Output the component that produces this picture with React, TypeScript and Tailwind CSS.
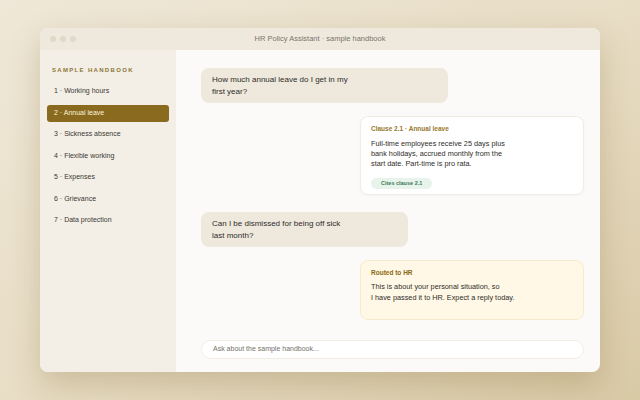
const sections = [
  'Working hours',
  'Annual leave',
  'Sickness absence',
  'Flexible working',
  'Expenses',
  'Grievance',
  'Data protection',
];

export default function App() {
  return (
    <div
      className="w-[640px] h-[400px] overflow-hidden bg-gradient-to-br from-[#efe8d8] via-[#e8ddc5] to-[#d9caa6] pt-[28px] pl-[40px]"
      style={{ fontFamily: '"Liberation Sans", Arial, sans-serif' }}
    >
      <div className="w-[560px] h-[344px] rounded-lg overflow-hidden flex flex-col bg-[#fcfaf8] shadow-[0_12px_30px_rgba(120,95,40,0.25)]">
        {/* title bar */}
        <div className="h-[22px] shrink-0 bg-[#efe9dd] flex items-center relative">
          <div className="flex gap-[4px] pl-[10px]">
            <span className="w-[6px] h-[6px] rounded-full bg-[#e0d8c8]"></span>
            <span className="w-[6px] h-[6px] rounded-full bg-[#e0d8c8]"></span>
            <span className="w-[6px] h-[6px] rounded-full bg-[#e0d8c8]"></span>
          </div>
          <div className="absolute inset-0 flex items-center justify-center text-[7.5px] text-[#7a756c]">
            HR Policy Assistant · sample handbook
          </div>
        </div>

        <div className="flex flex-1 min-h-0">
          {/* sidebar */}
          <div className="w-[136px] shrink-0 bg-[#f3efe7] px-[7px] pt-[16px]">
            <div className="pl-[5px] text-[6px] font-bold tracking-[0.22em] text-[#8c7634] mb-[8px]">
              SAMPLE HANDBOOK
            </div>
            <div className="flex flex-col gap-[4.5px]">
              {sections.map((s, i) => (
                <div
                  key={s}
                  className={`h-[17px] flex items-center pl-[7px] rounded-[3px] text-[7px] ${
                    i === 1 ? 'bg-[#8a6a1f] text-[#fbf3dd]' : 'text-[#3b3833]'
                  }`}
                >
                  {i + 1} · {s}
                </div>
              ))}
            </div>
          </div>

          {/* chat */}
          <div className="flex-1 flex flex-col pl-[25px] pr-[16px] pt-[18px]">
            <div className="w-[247px] h-[35px] rounded-lg bg-[#eee8dd] px-[11px] pt-[5.5px] text-[8px] leading-[12.5px] text-[#2f2d29]">
              How much annual leave do I get in my
              <br />
              first year?
            </div>

            <div className="self-end mt-[13px] w-[224px] h-[79px] rounded-lg bg-white border border-[#f0ebe3] shadow-[0_1px_3px_rgba(0,0,0,0.03)] px-[10px] pt-[8px]">
              <div className="text-[6.5px] font-bold text-[#97782c] leading-[8px]">
                Clause 2.1 · Annual leave
              </div>
              <div className="mt-[6px] text-[7.3px] leading-[9.8px] text-[#2f2d29]">
                Full-time employees receive 25 days plus
                <br />
                bank holidays, accrued monthly from the
                <br />
                start date. Part-time is pro rata.
              </div>
              <div className="mt-[5px] inline-flex items-center h-[11px] px-[10px] rounded-full bg-[#e8f3ec] text-[5.5px] font-bold text-[#3e7a55]">
                Cites clause 2.1
              </div>
            </div>

            <div className="mt-[17px] w-[207px] h-[35px] rounded-lg bg-[#eee8dd] px-[11px] pt-[5.5px] text-[8px] leading-[12.5px] text-[#2f2d29]">
              Can I be dismissed for being off sick
              <br />
              last month?
            </div>

            <div className="self-end mt-[13px] w-[224px] h-[60px] rounded-lg bg-[#fff8e6] border border-[#f6ebcb] px-[10px] pt-[8px]">
              <div className="text-[6.5px] font-bold text-[#8a6a12] leading-[8px]">Routed to HR</div>
              <div className="mt-[5px] text-[7.3px] leading-[10.5px] text-[#2f2d29]">
                This is about your personal situation, so
                <br />I have passed it to HR. Expect a reply today.
              </div>
            </div>

            <div className="mt-[20px] h-[19px] rounded-full bg-white border border-[#f1ece5] flex items-center pl-[11px] text-[7px] text-[#75716a]">
              Ask about the sample handbook...
            </div>
          </div>
        </div>
      </div>
    </div>
  );
}
